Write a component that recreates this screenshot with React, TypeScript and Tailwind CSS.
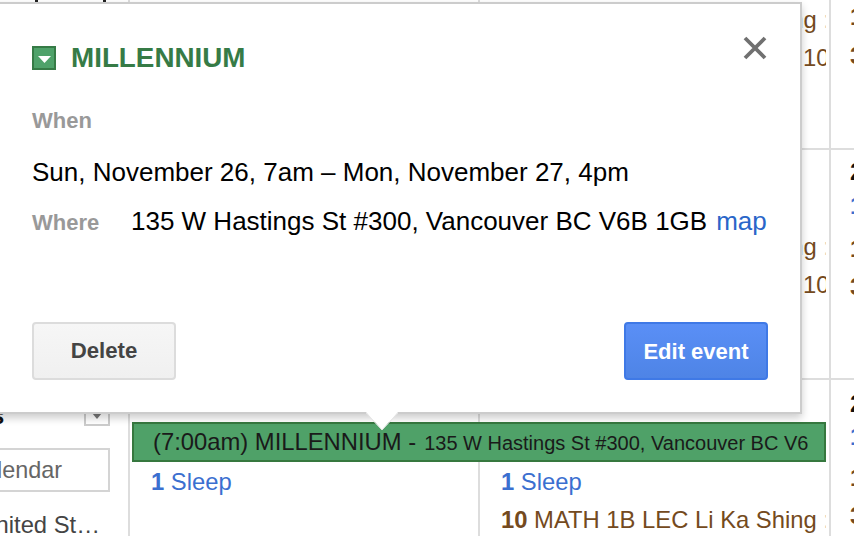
import React from "react";

const Brown = ({ n, text, end }: { n: string; text: string; end?: boolean }) => (
  <div className="h-[38px] overflow-hidden leading-[38px] whitespace-nowrap text-[#744a20]">
    <b>{n}</b> {text}
    {end && <span className="text-[#d8c8b4]"> :</span>}
  </div>
);

const Room = () => (
  <div className="h-[38px] overflow-hidden pl-[302px] leading-[38px] whitespace-nowrap text-[#744a20]">104</div>
);

const Sleep = () => (
  <div className="h-[38px] leading-[38px] whitespace-nowrap text-[#3b6fd0]">
    <b>1</b> Sleep
  </div>
);

const Column = ({ className, children }: { className: string; children?: React.ReactNode }) => (
  <div className={`overflow-hidden ${className}`}>{children}</div>
);

export default function App() {
  return (
    <div className="relative flex h-[536px] w-[854px] overflow-hidden bg-white text-[23.8px] font-['Liberation_Sans',Arial,sans-serif]">
      {/* sidebar */}
      <aside className="flex w-[130px] shrink-0 flex-col overflow-hidden border-r-2 border-[#dddddd]">
        <div className="flex h-[2px] shrink-0 gap-[65px] pl-[35px]">
          <span className="h-[2px] w-[3px] bg-[#222222]" />
          <span className="h-[2px] w-[3px] bg-[#222222]" />
        </div>
        <div className="mt-[404px] flex h-[20px] shrink-0 items-end justify-between pr-[18px]">
          <span className="-ml-[9px] text-[23.8px] font-bold leading-[20px] text-[#111111]">s</span>
          <span className="flex h-[26px] w-[26px] items-end justify-center border-2 border-t-0 border-[#cccccc] pb-[5px]">
            <svg width="10" height="6" viewBox="0 0 10 6">
              <polygon points="0,0 10,0 5,6" fill="#777777" />
            </svg>
          </span>
        </div>
        <div className="mt-[22px] flex h-[44px] w-[110px] shrink-0 items-center justify-end overflow-hidden border-2 border-l-0 border-[#d4d4d4] pr-[46px] pt-[2px] text-[23.4px] text-[#666666]">
          <span className="whitespace-nowrap">calendar</span>
        </div>
        <div className="mt-[19px] flex justify-end whitespace-nowrap pr-[28px] leading-[28px] text-[#444444]">
          <span>nited St…</span>
        </div>
      </aside>

      {/* month grid */}
      <main className="flex min-w-0 flex-1 flex-col">
        <section className="flex h-[150px] shrink-0 border-b-2 border-[#dddddd]">
          <Column className="w-[350px] border-r-2 border-[#dddddd]" />
          <Column className="w-[351px] border-r-2 border-[#dddddd] pr-[3px] pt-[1px] pl-[21px]">
            <Brown n="10" text="MATH 1B LEC Li Ka Shing" end />
            <Room />
          </Column>
          <Column className="flex-1 pl-[19px]">
            <div className="-mt-[2px]">
              <Brown n="10" text="MATH" />
            </div>
            <div className="mt-[1px]">
              <Brown n="3" text="CPSC" />
            </div>
          </Column>
        </section>

        <section className="flex h-[230px] shrink-0 border-b-2 border-[#dddddd]">
          <Column className="w-[350px] border-r-2 border-[#dddddd]" />
          <Column className="w-[351px] border-r-2 border-[#dddddd] pr-[3px] pt-[78px] pl-[21px]">
            <Brown n="10" text="MATH 1B LEC Li Ka Shing" end />
            <Room />
          </Column>
          <Column className="flex-1 pl-[19px] pt-[7px]">
            <div className="h-[30px] font-bold leading-[30px] text-[#111111]">27</div>
            <Sleep />
            <div className="mt-[5px]">
              <Brown n="1" text="MATH" />
            </div>
            <Brown n="3" text="CPSC" />
          </Column>
        </section>

        <section className="flex min-h-0 flex-1">
          <Column className="w-[350px] border-r-2 border-[#dddddd] pl-[21px] pt-[83px]">
            <Sleep />
          </Column>
          <Column className="w-[351px] border-r-2 border-[#dddddd] pr-[3px] pl-[21px] pt-[83px]">
            <Sleep />
            <Brown n="10" text="MATH 1B LEC Li Ka Shing" end />
          </Column>
          <Column className="flex-1 pl-[19px] pt-[10px]">
            <div className="h-[28px] font-bold leading-[28px] text-[#111111]">28</div>
            <Sleep />
            <div className="mt-[3px]">
              <Brown n="1" text="MATH" />
            </div>
            <Brown n="3" text="CPSC" />
          </Column>
        </section>
      </main>

      {/* event bar lying over the grid */}
      <div className="absolute left-[132px] top-[422px] flex h-[40px] w-[694px] items-center overflow-hidden whitespace-nowrap border-2 border-[#36783f] bg-[#4fa168] pl-[19px] pr-[16px] text-[#1a1a1a]">
        <div className="flex items-baseline overflow-hidden">
          <span>(7:00am) MILLENNIUM -</span>
          <span className="ml-[8px] text-[20px]">135 W Hastings St #300, Vancouver BC V6</span>
        </div>
      </div>

      {/* popup */}
      <div className="absolute left-[-10px] top-[2px] flex h-[412px] w-[812px] flex-col border-2 border-[#cccccc] bg-white pb-[32px] pl-[40px] pr-[32px] pt-[42px] shadow-[0_4px_8px_rgba(0,0,0,0.2)]">
        <div className="flex h-[24px] items-center">
          <span className="flex h-[24px] w-[24px] items-center justify-center border-2 border-[#367b46] bg-[#4fa26a]">
            <svg className="mt-[2px]" width="13" height="7" viewBox="0 0 13 7">
              <polygon points="0,0 13,0 6.5,7" fill="#ffffff" />
            </svg>
          </span>
          <h1 className="ml-[15px] text-[27.8px] font-bold leading-[30px] text-[#367b46]">MILLENNIUM</h1>
          <svg className="ml-auto mr-[1px] -mt-[21px]" width="24" height="24" viewBox="0 0 24 24">
            <path d="M2 2 L22 22 M22 2 L2 22" stroke="#707070" strokeWidth="3.8" fill="none" />
          </svg>
        </div>
        <div className="mt-[36px] h-[30px] font-bold leading-[30px] text-[22px] text-[#999999]">When</div>
        <div className="mt-[21px] h-[30px] whitespace-nowrap text-[26px] leading-[30px] text-black">
          Sun, November 26, 7am – Mon, November 27, 4pm
        </div>
        <div className="mt-[19px] flex h-[30px] items-baseline whitespace-nowrap text-[26px] leading-[30px]">
          <span className="w-[99px] text-[22px] font-bold text-[#999999]">Where</span>
          <span className="text-black">135 W Hastings St #300, Vancouver BC V6B 1GB</span>
          <a className="ml-[9px] text-[#2a66c9]">map</a>
        </div>
        <div className="mt-auto flex items-center justify-between">
          <button className="h-[58px] w-[144px] rounded-[4px] border-2 border-[#dcdcdc] bg-gradient-to-b from-[#f6f6f6] to-[#f0f0f0] text-[22.2px] font-bold text-[#444444]">
            Delete
          </button>
          <button className="h-[58px] w-[144px] rounded-[4px] border-2 border-[#3f79e6] bg-gradient-to-b from-[#5a8ff6] to-[#4e84e6] text-[22px] font-bold text-white">
            Edit event
          </button>
        </div>
      </div>

      {/* popup pointer */}
      <svg className="absolute left-[364px] top-[412px]" width="36" height="20" viewBox="0 0 36 20">
        <polygon points="2,0 34,0 18,18" fill="#ffffff" />
        <path d="M2 1 L18 18 L34 1" stroke="#e4e4e4" strokeWidth="1" fill="none" />
      </svg>
    </div>
  );
}
